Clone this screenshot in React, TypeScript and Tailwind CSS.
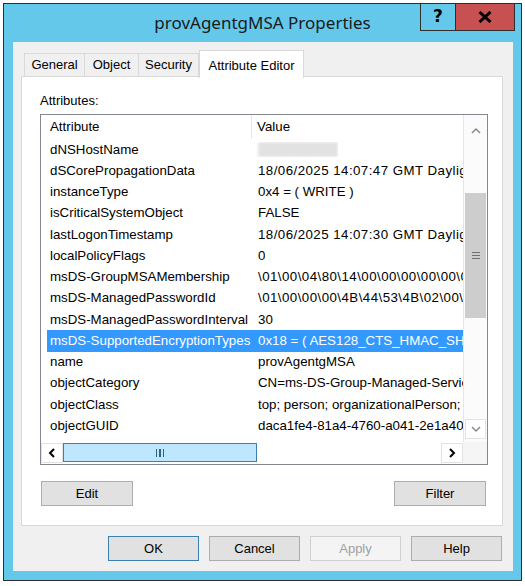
import React from "react";

const rows: [string, string | null, boolean][] = [
  ["dNSHostName", null, false],
  ["dSCorePropagationData", "18/06/2025 14:07:47 GMT Daylight Time", true],
  ["instanceType", "0x4 = ( WRITE )", false],
  ["isCriticalSystemObject", "FALSE", false],
  ["lastLogonTimestamp", "18/06/2025 14:07:30 GMT Daylight Time", true],
  ["localPolicyFlags", "0", false],
  ["msDS-GroupMSAMembership", "\\01\\00\\04\\80\\14\\00\\00\\00\\00\\00\\00\\00", true],
  ["msDS-ManagedPasswordId", "\\01\\00\\00\\00\\4B\\44\\53\\4B\\02\\00\\00\\00", true],
  ["msDS-ManagedPasswordInterval", "30", false],
  ["msDS-SupportedEncryptionTypes", "0x18 = ( AES128_CTS_HMAC_SHA1_96 | AES256_CTS_HMAC_SHA1_96 )", false],
  ["name", "provAgentgMSA", false],
  ["objectCategory", "CN=ms-DS-Group-Managed-Service-Account,CN=Schema", false],
  ["objectClass", "top; person; organizationalPerson; user; computer", false],
  ["objectGUID", "daca1fe4-81a4-4760-a041-2e1a40c3b2f1", false],
];

const SELECTED = 9;

function Chevron({ dir, color, w = 1.5 }: { dir: "up" | "down" | "left" | "right"; color: string; w?: number }) {
  const pts: Record<string, string> = {
    up: "1,6 5,2 9,6",
    down: "1,2 5,6 9,2",
    left: "6,1 2,5 6,9",
    right: "2,1 6,5 2,9",
  };
  const isV = dir === "up" || dir === "down";
  return (
    <svg width={isV ? 10 : 8} height={isV ? 8 : 10} viewBox={isV ? "0 0 10 8" : "0 0 8 10"}>
      <polyline points={pts[dir]} fill="none" stroke={color} strokeWidth={w} />
    </svg>
  );
}

function Btn({ children, kind = "normal", wide = false }: { children: React.ReactNode; kind?: "normal" | "default" | "disabled"; wide?: boolean }) {
  const base = "h-[25px] flex items-center justify-center border text-[13px] leading-none";
  const width = wide ? "w-[92px]" : "w-[91px]";
  const look =
    kind === "default"
      ? "bg-[#e1e1e1] border-[#3c7fb1] text-black"
      : kind === "disabled"
      ? "bg-[#f4f4f4] border-[#d0d0d0] text-[#a0a0a0]"
      : "bg-[#e1e1e1] border-[#adadad] text-black";
  return <div className={`${base} ${width} ${look}`}>{children}</div>;
}

export default function App() {
  return (
    <div className="w-[525px] h-[586px] bg-white pt-[3px] pl-[3px] font-['Liberation_Sans',Arial,sans-serif] text-black">
      <div className="w-[519px] h-[578px] border border-[#2e2e2e] bg-[#63c8ea] flex flex-col">
        {/* Title bar */}
        <div className="relative h-[38px] shrink-0 flex items-center justify-center">
          <span className="font-['Noto_Sans',sans-serif] text-[17px] text-[#1a1a1a] -mt-[1px]">provAgentgMSA Properties</span>
          <div className="absolute -top-px right-[6px] flex">
            <div className="w-[36px] h-[28px] border border-[#2e2e2e] flex items-center justify-center text-[17px] font-bold font-['DejaVu_Sans',sans-serif] text-black">
              ?
            </div>
            <div className="w-[59px] h-[28px] border-y border-r border-[#2e2e2e] bg-[#c75050] flex items-center justify-center">
              <svg width="14" height="12" viewBox="0 0 14 12">
                <path d="M1.5 1 L12.5 11 M12.5 1 L1.5 11" stroke="#000" strokeWidth="3" />
              </svg>
            </div>
          </div>
        </div>

        {/* Client area */}
        <div className="ml-[9px] w-[500px] h-[529px] bg-[#f0f0f0] flex flex-col">
          {/* Tabs */}
          <div className="pt-[8px] pl-[11px] h-[34px] flex items-end text-[13px]">
            <div className="w-[61px] h-[23px] border-l border-t border-r border-[#d9d9d9] bg-[#f0f0f0] flex items-center justify-center">General</div>
            <div className="w-[54px] h-[23px] border-t border-r border-[#d9d9d9] bg-[#f0f0f0] flex items-center justify-center">Object</div>
            <div className="w-[60px] h-[23px] border-t border-r border-[#d9d9d9] bg-[#f0f0f0] flex items-center justify-center">Security</div>
            <div className="relative z-10 -mb-[2px] w-[105px] h-[28px] border-l border-t border-r border-[#d9d9d9] bg-white flex justify-center pt-[5px]">
              Attribute Editor
            </div>
          </div>

          {/* Tab panel */}
          <div className="ml-[8px] w-[482px] h-[450px] border border-[#d9d9d9] bg-white flex flex-col pl-[18px] pr-[16px]">
            <div className="pt-[16px] h-[32px] text-[13px] leading-[16px]">Attributes:</div>
            <div className="mt-[5px] w-[448px] h-[351px] border border-[#828790] flex flex-col text-[13.3px]">
              <div className="flex h-[327px]">
                {/* list content */}
                <div className="w-[422px] overflow-hidden flex flex-col">
                  <div className="h-[24px] shrink-0 flex items-stretch ml-[6px]">
                    <div className="w-[205px] pl-[3px] border-r border-[#e5e5e5] flex items-center">Attribute</div>
                    <div className="pl-[5px] flex items-center">Value</div>
                  </div>
                  {rows.map(([k, v, wideDigits], i) => (
                    <div
                      key={k}
                      className={`h-[21.25px] shrink-0 ml-[6px] flex items-center whitespace-nowrap ${i === SELECTED ? "bg-[#3399ff] text-white" : ""}`}
                    >
                      <div className="w-[208px] shrink-0 pl-[3px]">{k}</div>
                      <div className={`pl-[3px] overflow-hidden ${wideDigits ? "tracking-[0.45px]" : ""}`}>
                        {v === null ? (
                          <div className="w-[80px] h-[15px] bg-[#e2e2e2] blur-[1.5px]" />
                        ) : (
                          v
                        )}
                      </div>
                    </div>
                  ))}
                </div>
                {/* vertical scrollbar */}
                <div className="w-[24px] border-l border-[#e6e6e6] bg-[#fbfbfb] flex flex-col">
                  <div className="h-[26px] flex items-center justify-center pt-[5px]">
                    <Chevron dir="up" color="#8a8a8a" />
                  </div>
                  <div className="h-[52px]" />
                  <div className="h-[125px] mx-[1px] bg-[#cdcdcd] flex flex-col items-center justify-center gap-[2px]">
                    <div className="w-[8px] h-px bg-[#707070]" />
                    <div className="w-[8px] h-px bg-[#707070]" />
                    <div className="w-[8px] h-px bg-[#707070]" />
                  </div>
                  <div className="flex-1" />
                  <div className="h-[20px] mb-[3px] mx-[1px] border border-[#e2e2e2] bg-white flex items-center justify-center">
                    <Chevron dir="down" color="#8a8a8a" />
                  </div>
                </div>
              </div>
              {/* horizontal scrollbar */}
              <div className="h-[22px] flex bg-white">
                <div className="w-[22px] h-[20px] mt-px border border-[#e2e2e2] flex items-center justify-center">
                  <Chevron dir="left" color="#000" w={2} />
                </div>
                <div className="w-[194px] h-[19px] mt-px bg-[#bee6fd] border border-[#3c7fb1] flex items-center justify-center gap-[2px]">
                  <div className="w-[1.5px] h-[8px] bg-[#2c628b]" />
                  <div className="w-[1.5px] h-[8px] bg-[#2c628b]" />
                  <div className="w-[1.5px] h-[8px] bg-[#2c628b]" />
                </div>
                <div className="flex-1" />
                <div className="w-[22px] h-[20px] mt-px border border-[#e2e2e2] flex items-center justify-center">
                  <Chevron dir="right" color="#000" w={2} />
                </div>
                <div className="w-[24px] bg-[#f5f5f5]" />
              </div>
            </div>
            <div className="mt-[16px] flex justify-between pl-px">
              <Btn wide>Edit</Btn>
              <Btn wide>Filter</Btn>
            </div>
          </div>

          {/* Bottom buttons */}
          <div className="mt-[10px] flex justify-end gap-[10px] pr-[11px]">
            <Btn kind="default">OK</Btn>
            <Btn>Cancel</Btn>
            <Btn kind="disabled">Apply</Btn>
            <Btn>Help</Btn>
          </div>
        </div>
      </div>
    </div>
  );
}
